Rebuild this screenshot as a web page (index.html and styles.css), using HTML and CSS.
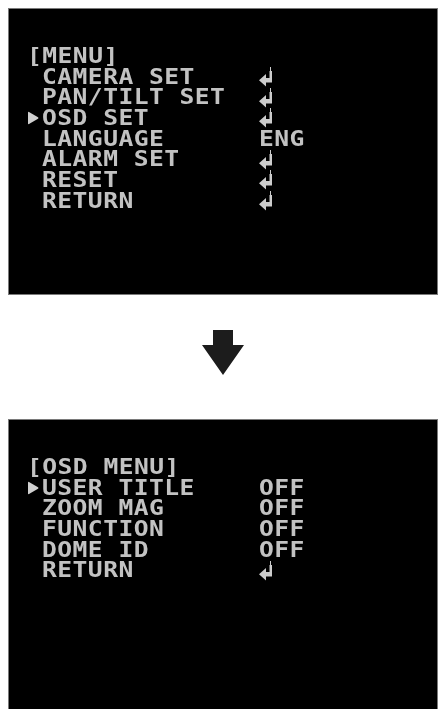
FILE: index.html
```html
<!DOCTYPE html>
<html>
<head>
<meta charset="utf-8">
<link rel="stylesheet" href="styles.css">
</head>
<body>
<div class="page">
  <section class="screen">
    <div class="menu">
      <div class="title txt">[MENU]</div>
      <span class="mark"></span><span class="label txt">CAMERA SET</span><span class="value"><svg class="enter" viewBox="0 0 14 20"><path d="M11 0h1v4h1v11h-2.5v-11h0.5z M4.5 11h8.5v4.5h-8.5z M0 13.2 L7 7 L7 19.5 Z"/></svg></span>
      <span class="mark"></span><span class="label txt">PAN/TILT SET</span><span class="value"><svg class="enter" viewBox="0 0 14 20"><path d="M11 0h1v4h1v11h-2.5v-11h0.5z M4.5 11h8.5v4.5h-8.5z M0 13.2 L7 7 L7 19.5 Z"/></svg></span>
      <span class="mark"><svg class="sel" viewBox="0 0 12 14"><path d="M1 1.5 Q1 0.5 2 1 L11 6.2 Q12 7 11 7.8 L2 13 Q1 13.5 1 12.5 Z"/></svg></span><span class="label txt">OSD SET</span><span class="value"><svg class="enter" viewBox="0 0 14 20"><path d="M11 0h1v4h1v11h-2.5v-11h0.5z M4.5 11h8.5v4.5h-8.5z M0 13.2 L7 7 L7 19.5 Z"/></svg></span>
      <span class="mark"></span><span class="label txt">LANGUAGE</span><span class="value txt">ENG</span>
      <span class="mark"></span><span class="label txt">ALARM SET</span><span class="value"><svg class="enter" viewBox="0 0 14 20"><path d="M11 0h1v4h1v11h-2.5v-11h0.5z M4.5 11h8.5v4.5h-8.5z M0 13.2 L7 7 L7 19.5 Z"/></svg></span>
      <span class="mark"></span><span class="label txt">RESET</span><span class="value"><svg class="enter" viewBox="0 0 14 20"><path d="M11 0h1v4h1v11h-2.5v-11h0.5z M4.5 11h8.5v4.5h-8.5z M0 13.2 L7 7 L7 19.5 Z"/></svg></span>
      <span class="mark"></span><span class="label txt">RETURN</span><span class="value"><svg class="enter" viewBox="0 0 14 20"><path d="M11 0h1v4h1v11h-2.5v-11h0.5z M4.5 11h8.5v4.5h-8.5z M0 13.2 L7 7 L7 19.5 Z"/></svg></span>
    </div>
  </section>

  <div class="arrow-row">
    <svg class="down" viewBox="0 0 42 45"><path d="M11 0h20v15h11L21 45L0 15h11z"/></svg>
  </div>

  <section class="screen screen-bottom">
    <div class="menu">
      <div class="title txt">[OSD MENU]</div>
      <span class="mark"><svg class="sel" viewBox="0 0 12 14"><path d="M1 1.5 Q1 0.5 2 1 L11 6.2 Q12 7 11 7.8 L2 13 Q1 13.5 1 12.5 Z"/></svg></span><span class="label txt">USER TITLE</span><span class="value txt">OFF</span>
      <span class="mark"></span><span class="label txt">ZOOM MAG</span><span class="value txt">OFF</span>
      <span class="mark"></span><span class="label txt">FUNCTION</span><span class="value txt">OFF</span>
      <span class="mark"></span><span class="label txt">DOME ID</span><span class="value txt">OFF</span>
      <span class="mark"></span><span class="label txt">RETURN</span><span class="value"><svg class="enter" viewBox="0 0 14 20"><path d="M11 0h1v4h1v11h-2.5v-11h0.5z M4.5 11h8.5v4.5h-8.5z M0 13.2 L7 7 L7 19.5 Z"/></svg></span>
    </div>
  </section>
</div>
</body>
</html>
```

FILE: styles.css
```css
html, body {
  margin: 0;
  padding: 0;
  background: #ffffff;
  overflow: hidden;
}

.page {
  width: 440px;
  height: 709px;
  overflow: hidden;
  padding-top: 8px;
  box-sizing: border-box;
}

.screen {
  margin-left: 8px;
  width: 430px;
  height: 287px;
  box-sizing: border-box;
  background: #000000;
  border: 1px solid #7a7a7a;
  padding: 37px 0 0 18px;
}

.screen-bottom {
  height: 300px;
}

.menu {
  display: grid;
  grid-template-columns: 15px 217px auto;
  grid-auto-rows: 20.7px;
  align-items: center;
  font-family: "DejaVu Sans Mono", monospace;
  font-weight: bold;
  font-size: 22px;
  line-height: 20.7px;
  letter-spacing: 0.4px;
  color: #c2c2c2;
  filter: blur(0.5px);
}

.txt {
  transform: scaleX(1.12);
  transform-origin: left center;
}

.title {
  grid-column: 1 / -1;
}

.mark {
  display: flex;
  align-items: center;
  height: 20.7px;
}

.sel {
  width: 12px;
  height: 14px;
  fill: #d0d0d0;
}

.label,
.value {
  white-space: pre;
}

.value {
  display: flex;
  align-items: center;
  height: 20.7px;
}

.enter {
  width: 14px;
  height: 20px;
  fill: #cccccc;
}

.arrow-row {
  display: flex;
  justify-content: center;
  padding: 35px 0 44px 6px;
}

.down {
  width: 42px;
  height: 45px;
  fill: #1c1c1c;
}
```
